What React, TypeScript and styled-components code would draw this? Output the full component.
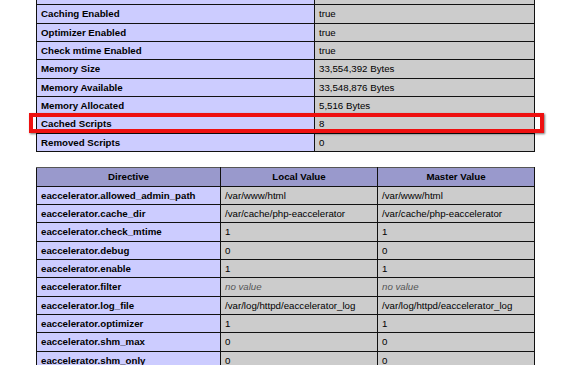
import React from 'react'
import styled, { createGlobalStyle } from 'styled-components'

interface InfoRow {
  name: string
  value: string
  marked?: boolean
}

interface DirectiveRow {
  name: string
  local: string
  master: string
}

// first row is scrolled out of view, only its bottom edge shows
const infoRows: InfoRow[] = [
  { name: '', value: '' },
  { name: 'Caching Enabled', value: 'true' },
  { name: 'Optimizer Enabled', value: 'true' },
  { name: 'Check mtime Enabled', value: 'true' },
  { name: 'Memory Size', value: '33,554,392 Bytes' },
  { name: 'Memory Available', value: '33,548,876 Bytes' },
  { name: 'Memory Allocated', value: '5,516 Bytes' },
  { name: 'Cached Scripts', value: '8', marked: true },
  { name: 'Removed Scripts', value: '0' },
]

const directives: DirectiveRow[] = [
  { name: 'eaccelerator.allowed_admin_path', local: '/var/www/html', master: '/var/www/html' },
  { name: 'eaccelerator.cache_dir', local: '/var/cache/php-eaccelerator', master: '/var/cache/php-eaccelerator' },
  { name: 'eaccelerator.check_mtime', local: '1', master: '1' },
  { name: 'eaccelerator.debug', local: '0', master: '0' },
  { name: 'eaccelerator.enable', local: '1', master: '1' },
  { name: 'eaccelerator.filter', local: '', master: '' },
  { name: 'eaccelerator.log_file', local: '/var/log/httpd/eaccelerator_log', master: '/var/log/httpd/eaccelerator_log' },
  { name: 'eaccelerator.optimizer', local: '1', master: '1' },
  { name: 'eaccelerator.shm_max', local: '0', master: '0' },
  { name: 'eaccelerator.shm_only', local: '0', master: '0' },
]

export default function App() {
  return (
    <>
      <GlobalStyle />
      <Page>
        <Table>
          <colgroup>
            <col style={{ width: 278 }} />
            <col style={{ width: 220 }} />
          </colgroup>
          <tbody>
            {infoRows.map((r, i) => (
              <Row key={i}>
                <Label>
                  {r.marked && <Highlight />}
                  {r.name}
                </Label>
                <Value>{r.value}</Value>
              </Row>
            ))}
          </tbody>
        </Table>
        <Table>
          <colgroup>
            <col style={{ width: 184 }} />
            <col style={{ width: 157 }} />
            <col style={{ width: 157 }} />
          </colgroup>
          <thead>
            <HeadRow>
              <Head>Directive</Head>
              <Head>Local Value</Head>
              <Head>Master Value</Head>
            </HeadRow>
          </thead>
          <tbody>
            {directives.map((d) => (
              <Row key={d.name}>
                <Label>{d.name}</Label>
                <Value>{d.local || <NoValue>no value</NoValue>}</Value>
                <Value>{d.master || <NoValue>no value</NoValue>}</Value>
              </Row>
            ))}
          </tbody>
        </Table>
      </Page>
    </>
  )
}

const GlobalStyle = createGlobalStyle`
  html, body {
    margin: 0;
    background: #ffffff;
    overflow: hidden;
  }
  body {
    font-family: "Liberation Sans", Arial, sans-serif;
    color: #000;
  }
`

const Page = styled.div`
  display: flex;
  flex-direction: column;
  gap: 15px;
  padding-left: 36px;
  margin-top: -14px;
`

const Table = styled.table`
  border-collapse: collapse;
  width: 498px;
  table-layout: fixed;
  font-size: 9.7px;
`

const Row = styled.tr`
  height: 18.33px;
`

const HeadRow = styled.tr`
  height: 18.7px;
`

const Cell = styled.td`
  border: 1px solid #111;
  padding: 0 4px;
  vertical-align: middle;
  white-space: nowrap;
`

const Label = styled(Cell)`
  position: relative;
  background: #ccccff;
  font-weight: bold;
`

const Value = styled(Cell)`
  background: #cccccc;
`

const Head = styled.th`
  border: 1px solid #111;
  border-top-color: #555;
  background: #9999cc;
  font-weight: bold;
  text-align: center;
  padding: 0 4px;
`

const NoValue = styled.i`
  color: #555555;
`

const Highlight = styled.span`
  position: absolute;
  top: -2px;
  left: -8px;
  width: 515px;
  height: 20px;
  box-sizing: border-box;
  border: 4px solid #ee1010;
  box-shadow: 1px 1px 2px rgba(0, 0, 0, 0.55);
  pointer-events: none;
`
